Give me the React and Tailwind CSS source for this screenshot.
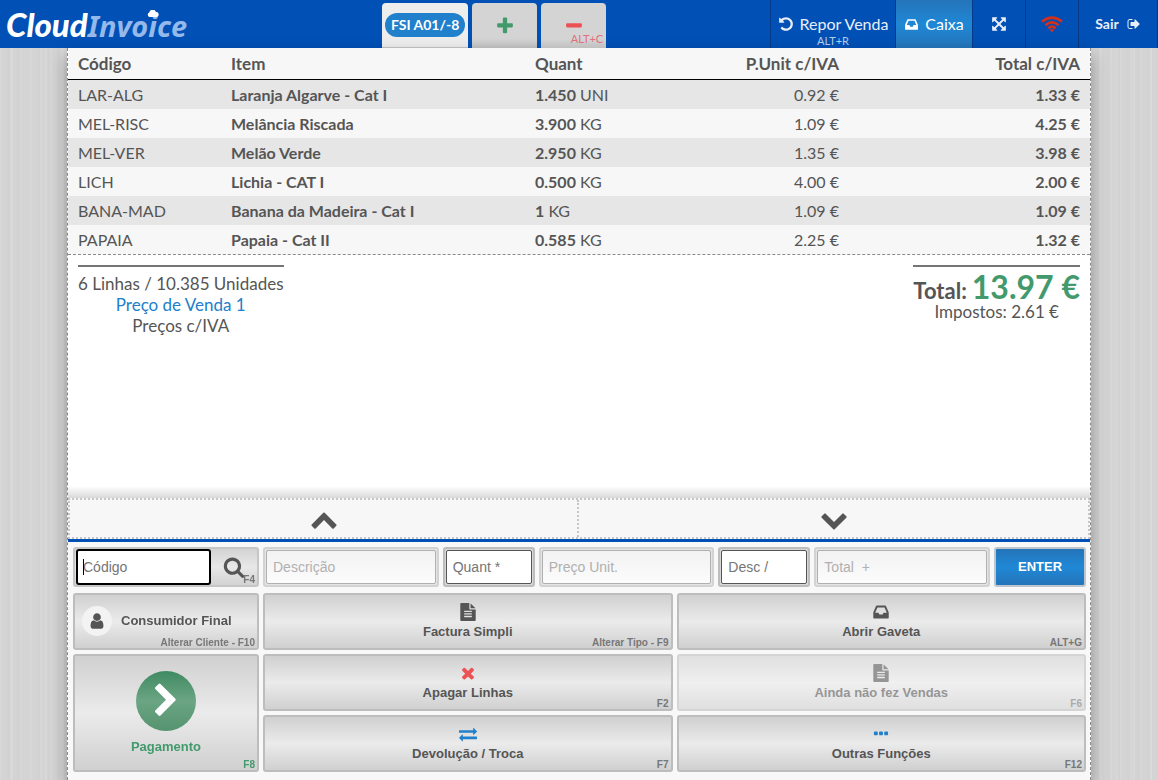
import React from "react";
import clsx from "clsx";

const ICONS = {
  undo: "M1664 896q0 156-61 298t-164 245-245 164-298 61q-172 0-327-72.5t-264-204.5q-7-10-6.5-22.5t8.5-20.5l137-138q10-9 25-9 16 2 23 12 73 95 179 147t225 52q104 0 198.5-40.5t163.5-109.5 109.5-163.5 40.5-198.5-40.5-198.5-109.5-163.5-163.5-109.5-198.5-40.5q-98 0-188 35.5t-160 101.5l137 138q31 30 14 69-17 40-59 40h-448q-26 0-45-19t-19-45v-448q0-42 40-59 39-17 69 14l130 129q107-101 244.5-156.5t284.5-55.5q156 0 298 61t245 164 164 245 61 298z",
  inbox: "M1151 960h316q-1-3-2.5-8.5t-2.5-7.5l-212-496h-708l-212 496q-1 3-2.5 8.5t-2.5 7.5h316l95 192h320zm513 30v482q0 26-19 45t-45 19h-1408q-26 0-45-19t-19-45v-482q0-62 25-123l238-552q10-25 36.5-42t52.5-17h832q26 0 52.5 17t36.5 42l238 552q25 61 25 123z",
  expand: "M1411 541l-355 355 355 355 144-144q29-31 70-14 39 17 39 59v448q0 26-19 45t-45 19h-448q-42 0-59-40-17-39 14-69l144-144-355-355-355 355 144 144q31 30 14 69-17 40-59 40h-448q-26 0-45-19t-19-45v-448q0-42 40-59 39-17 69 14l144 144 355-355-355-355-144 144q-19 19-45 19-12 0-24-5-40-17-40-59v-448q0-26 19-45t45-19h448q42 0 59 40 17 39-14 69l-144 144 355 355 355-355-144-144q-31-30-14-69 17-40 59-40h448q26 0 45 19t19 45v448q0 42-39 59-13 5-25 5-26 0-45-19z",
  signOut: "M704 1440q0 4 1 20t.5 26.5-3 23.5-10 19.5-20.5 6.5h-320q-119 0-203.5-84.5t-84.5-203.5v-704q0-119 84.5-203.5t203.5-84.5h320q13 0 22.5 9.5t9.5 22.5q0 4 1 20t.5 26.5-3 23.5-10 19.5-20.5 6.5h-320q-66 0-113 47t-47 113v704q0 66 47 113t113 47h312l11.5 1 11.5 3 8 5.5 7 9 2 13.5zm928-544q0 26-19 45l-544 544q-19 19-45 19t-45-19-19-45v-288h-448q-26 0-45-19t-19-45v-384q0-26 19-45t45-19h448v-288q0-26 19-45t45-19 45 19l544 544q19 19 19 45z",
  plus: "M1600 736v192q0 40-28 68t-68 28h-416v416q0 40-28 68t-68 28h-192q-40 0-68-28t-28-68v-416h-416q-40 0-68-28t-28-68v-192q0-40 28-68t68-28h416v-416q0-40 28-68t68-28h192q40 0 68 28t28 68v416h416q40 0 68 28t28 68z",
  minus: "M1600 736v192q0 40-28 68t-68 28h-1216q-40 0-68-28t-28-68v-192q0-40 28-68t68-28h1216q40 0 68 28t28 68z",
  times: "M1490 1322q0 40-28 68l-136 136q-28 28-68 28t-68-28l-294-294-294 294q-28 28-68 28t-68-28l-136-136q-28-28-28-68t28-68l294-294-294-294q-28-28-28-68t28-68l136-136q28-28 68-28t68 28l294 294 294-294q28-28 68-28t68 28l136 136q28 28 28 68t-28 68l-294 294 294 294q28 28 28 68z",
  chevronUp: "M1683 1331l-166 165q-19 19-45 19t-45-19l-531-531-531 531q-19 19-45 19t-45-19l-166-165q-19-19-19-45.5t19-45.5l742-741q19-19 45-19t45 19l742 741q19 19 19 45.5t-19 45.5z",
  chevronDown: "M1683 808l-742 741q-19 19-45 19t-45-19l-742-741q-19-19-19-45.5t19-45.5l166-165q19-19 45-19t45 19l531 531 531-531q19-19 45-19t45 19l166 165q19 19 19 45.5t-19 45.5z",
  chevronRight: "M1363 877l-742 742q-19 19-45 19t-45-19l-166-166q-19-19-19-45t19-45l531-531-531-531q-19-19-19-45t19-45l166-166q19-19 45-19t45 19l742 742q19 19 19 45t-19 45z",
  search: "M1216 832q0-185-131.5-316.5t-316.5-131.5-316.5 131.5-131.5 316.5 131.5 316.5 316.5 131.5 316.5-131.5 131.5-316.5zm512 832q0 52-38 90t-90 38q-54 0-90-38l-343-342q-179 124-399 124-143 0-273.5-55.5t-225-150-150-225-55.5-273.5 55.5-273.5 150-225 225-150 273.5-55.5 273.5 55.5 225 150 150 225 55.5 273.5q0 220-124 399l343 343q37 37 37 90z",
  user: "M1536 1399q0 109-62.5 187t-150.5 78h-854q-88 0-150.5-78t-62.5-187q0-85 8.5-160.5t31.5-152 58.5-131 94-89 134.5-34.5q131 128 313 128t313-128q76 0 134.5 34.5t94 89 58.5 131 31.5 152 8.5 160.5zm-256-887q0 159-112.5 271.5t-271.5 112.5-271.5-112.5-112.5-271.5 112.5-271.5 271.5-112.5 271.5 112.5 112.5 271.5z",
  file: "M1596 476q14 14 28 36h-472v-472q22 14 36 28zm-476 164h544v1056q0 40-28 68t-68 28h-1344q-40 0-68-28t-28-68v-1600q0-40 28-68t68-28h800v544q0 40 28 68t68 28zm160 736v-64q0-14-9-23t-23-9h-704q-14 0-23 9t-9 23v64q0 14 9 23t23 9h704q14 0 23-9t9-23zm0-256v-64q0-14-9-23t-23-9h-704q-14 0-23 9t-9 23v64q0 14 9 23t23 9h704q14 0 23-9t9-23zm0-256v-64q0-14-9-23t-23-9h-704q-14 0-23 9t-9 23v64q0 14 9 23t23 9h704q14 0 23-9t9-23z",
  exchange: "M1792 1184v192q0 13-9.5 22.5t-22.5 9.5h-1376v192q0 13-9.5 22.5t-22.5 9.5q-12 0-24-10l-319-320q-9-9-9-22 0-14 9-23l320-320q9-9 23-9 13 0 22.5 9.5t9.5 22.5v192h1376q13 0 22.5 9.5t9.5 22.5zm0-544q0 14-9 23l-320 320q-9 9-23 9-13 0-22.5-9.5t-9.5-22.5v-192h-1376q-13 0-22.5-9.5t-9.5-22.5v-192q0-13 9.5-22.5t22.5-9.5h1376v-192q0-14 9-23t23-9q12 0 24 10l319 319q9 9 9 23z",
  ellipsis: "M576 736v192q0 40-28 68t-68 28h-192q-40 0-68-28t-28-68v-192q0-40 28-68t68-28h192q40 0 68 28t28 68zm512 0v192q0 40-28 68t-68 28h-192q-40 0-68-28t-28-68v-192q0-40 28-68t68-28h192q40 0 68 28t28 68zm512 0v192q0 40-28 68t-68 28h-192q-40 0-68-28t-28-68v-192q0-40 28-68t68-28h192q40 0 68 28t28 68z",
};

const LINES = [
  { code: "LAR-ALG", item: "Laranja Algarve - Cat I", qty: "1.450", unit: "UNI", price: "0.92 €", total: "1.33 €" },
  { code: "MEL-RISC", item: "Melância Riscada", qty: "3.900", unit: "KG", price: "1.09 €", total: "4.25 €" },
  { code: "MEL-VER", item: "Melão Verde", qty: "2.950", unit: "KG", price: "1.35 €", total: "3.98 €" },
  { code: "LICH", item: "Lichia - CAT I", qty: "0.500", unit: "KG", price: "4.00 €", total: "2.00 €" },
  { code: "BANA-MAD", item: "Banana da Madeira - Cat I", qty: "1", unit: "KG", price: "1.09 €", total: "1.09 €" },
  { code: "PAPAIA", item: "Papaia - Cat II", qty: "0.585", unit: "KG", price: "2.25 €", total: "1.32 €" },
];

function Icon({ name, className }) {
  return (
    <svg viewBox="0 0 1792 1792" fill="currentColor" aria-hidden="true" className={clsx("shrink-0", className)}>
      <path d={ICONS[name]} />
    </svg>
  );
}

function WifiIcon() {
  return (
    <svg viewBox="0 0 22 17" fill="none" stroke="#d2301c" strokeWidth="2.7" className="h-[17px] w-[22px]" aria-hidden="true">
      <path d="M1 5.6Q11-2.2 21 5.6" />
      <path d="M4.4 9.2Q11 3.6 17.6 9.2" />
      <path d="M7.4 12.4Q11 9 14.6 12.4" />
      <path d="M8.8 13.8Q11 12 13.2 13.8L11 16.6z" fill="#d2301c" stroke="none" />
    </svg>
  );
}

function Logo() {
  return (
    <a href="#inicio" className="relative flex items-baseline pl-[6px] italic leading-[48px]">
      <span className="text-[33px] font-black text-white">Cloud</span>
      <span className="font-['Noto_Sans'] text-[29px] font-bold text-[#94b9ea]">Invoice</span>
      <svg viewBox="0 0 12 7" fill="white" className="absolute top-[10px] left-[147px] h-[7px] w-[12px]" aria-hidden="true">
        <path d="M2.5 7A2.3 2.3 0 0 1 2.3 2.6 3.4 3.4 0 0 1 8.9 2 2.5 2.5 0 0 1 9.5 7z" />
      </svg>
    </a>
  );
}

function Header() {
  const item = "flex items-center justify-center border-l border-[#063a86] text-[#e8eef8]";
  return (
    <header className="flex h-12 bg-[#0050b5]">
      <div className="w-[33%] shrink-0">
        <Logo />
      </div>

      <div className="flex items-end gap-1">
        <button className="flex h-[45px] w-[86px] items-center justify-center rounded-t border-b border-[#c4c4c4] bg-[#ededed]">
          <span className="rounded-full bg-[#2080cb] px-[6px] text-sm leading-6 font-bold whitespace-nowrap text-white">
            FSI A01/-8
          </span>
        </button>
        <button
          aria-label="Nova venda"
          className="flex h-[45px] w-[65px] items-center justify-center rounded-t bg-linear-to-b from-[#d4d4d4] from-80% to-[#c0c0c0] text-[#429a6c]"
        >
          <Icon name="plus" className="size-5" />
        </button>
        <button
          aria-label="Cancelar venda"
          className="relative flex h-[45px] w-[65px] items-center justify-center rounded-t bg-linear-to-b from-[#d4d4d4] from-80% to-[#c0c0c0] text-[#ec5153]"
        >
          <Icon name="minus" className="size-5" />
          <span className="absolute right-[3px] bottom-px text-[11px] leading-4 text-[#e2707a]">ALT+C</span>
        </button>
      </div>

      <nav className="ml-auto flex border-r border-[#063a86]">
        <button className={clsx(item, "relative w-[125px] gap-[6px]")}>
          <Icon name="undo" className="size-4" />
          <span className="text-base">Repor Venda</span>
          <span className="absolute inset-x-0 bottom-0 text-[11px] leading-[14px] text-[#b3cbec]">ALT+R</span>
        </button>
        <button className="flex w-[77px] items-center justify-center gap-[6px] border-l border-[#063a86] bg-linear-to-b from-[#2474b9] via-[#1f88d6] to-[#2474b9] text-white">
          <Icon name="inbox" className="size-[15px]" />
          <span className="text-base">Caixa</span>
        </button>
        <button aria-label="Ecrã inteiro" className={clsx(item, "w-[53px]")}>
          <Icon name="expand" className="size-4" />
        </button>
        <button aria-label="Ligação" className={clsx(item, "w-[53px]")}>
          <WifiIcon />
        </button>
        <a href="#sair" className={clsx(item, "w-[79px] gap-2 text-sm font-bold")}>
          Sair
          <Icon name="signOut" className="size-[14px]" />
        </a>
      </nav>
    </header>
  );
}

function LinesTable() {
  return (
    <div className="border-b border-dashed border-[#8a8a8a]">
      <table className="w-full table-fixed border-separate border-spacing-0 text-left text-base">
        <thead>
          <tr className="h-8 bg-[#f7f7f7] text-[17px]">
            <th className="w-[153px] border-b border-black px-[10px] font-bold">Código</th>
            <th className="w-[304px] border-b border-black px-[10px] font-bold">Item</th>
            <th className="w-[162px] border-b border-black px-[10px] font-bold">Quant</th>
            <th className="w-[162px] border-b border-black px-[10px] text-right font-bold">P.Unit c/IVA</th>
            <th className="border-b border-black px-[10px] text-right font-bold">Total c/IVA</th>
          </tr>
        </thead>
        <tbody>
          {LINES.map((line) => (
            <tr key={line.code} className="h-[29px] odd:bg-[#e6e6e6] even:bg-[#f7f7f7]">
              <td className="px-[10px]">{line.code}</td>
              <td className="px-[10px] font-bold">{line.item}</td>
              <td className="px-[10px]">
                <b>{line.qty}</b> {line.unit}
              </td>
              <td className="px-[10px] text-right">{line.price}</td>
              <td className="px-[10px] text-right font-bold">{line.total}</td>
            </tr>
          ))}
        </tbody>
      </table>
    </div>
  );
}

function Totals() {
  return (
    <div className="flex items-start justify-between px-[10px] pt-[10px]">
      <div className="border-t-2 border-[#757575] pt-[6px] text-center text-[17px] leading-[21px]">
        <p>6 Linhas / 10.385 Unidades</p>
        <p className="text-[#2080cb]">Preço de Venda 1</p>
        <p>Preços c/IVA</p>
      </div>
      <div className="border-t-2 border-[#757575] pt-1 text-center">
        <p className="flex items-baseline justify-center gap-[5px] font-bold">
          <span className="text-[22px] leading-6">Total:</span>
          <span className="text-[32px] leading-8 text-[#429a6c]">13.97 €</span>
        </p>
        <p className="text-[17px] leading-[18px]">Impostos: 2.61 €</p>
      </div>
    </div>
  );
}

function Scroller() {
  const half = "flex items-center justify-center";
  return (
    <div className="grid h-[41px] grid-cols-2 border-2 border-dotted border-[#c6c6c6] bg-[#f7f7f7]">
      <button aria-label="Subir" className={clsx(half, "border-r-2 border-dotted border-[#c6c6c6]")}>
        <Icon name="chevronUp" className="size-7" />
      </button>
      <button aria-label="Descer" className={half}>
        <Icon name="chevronDown" className="size-7" />
      </button>
    </div>
  );
}

function Field({ label, disabled, className }) {
  return (
    <div
      className={clsx(
        "flex h-10 rounded-[3px] border-2 p-px",
        disabled ? "border-[#d3d3d3] bg-[#e4e4e4]" : "border-[#bdbdbd] bg-[#d8d8d8]",
        className
      )}
    >
      <input
        aria-label={label}
        placeholder={label}
        disabled={disabled}
        className={clsx(
          "w-full min-w-0 rounded-[2px] border px-[6px] text-sm",
          disabled
            ? "border-[#b0b0b0] bg-linear-to-b from-[#f2f2f2] to-[#fcfcfc] placeholder:text-[#b0b0b0]"
            : "border-[#555] bg-white placeholder:text-[#757575]"
        )}
      />
    </div>
  );
}

function EntryRow() {
  return (
    <form className="flex gap-1" onSubmit={(e) => e.preventDefault()}>
      <div className="relative flex h-10 w-[186px] rounded-[3px] border-2 border-[#c6c6c6] bg-linear-to-b from-[#d3d3d3] via-[#e8e8e8] to-[#d3d3d3]">
        <input
          autoFocus
          aria-label="Código"
          placeholder="Código"
          className="peer ml-px w-[135px] rounded-[3px] border-2 border-black bg-white px-[5px] text-sm outline-none placeholder:text-[#757575] placeholder-shown:caret-transparent"
        />
        {/* caret of the empty box */}
        <span className="pointer-events-none absolute top-[10px] left-2 hidden h-4 w-px bg-black peer-placeholder-shown:block" />
        <button type="button" aria-label="Procurar" className="relative flex flex-1 items-center justify-center">
          <Icon name="search" className="size-[22px]" />
          <span className="absolute right-[2px] -bottom-px text-[10px] leading-3 font-bold text-[#777]">F4</span>
        </button>
      </div>
      <Field label="Descrição" disabled className="flex-1" />
      <Field label="Quant *" className="w-[92px]" />
      <Field label="Preço Unit." disabled className="flex-1" />
      <Field label="Desc /" className="w-[92px]" />
      <Field label="Total  +" disabled className="flex-1" />
      <button className="h-10 w-[92px] rounded-[3px] border-2 border-[#bdc6cf] bg-linear-to-b from-[#2474b9] via-[#1f88d6] to-[#2474b9] text-[13px] font-bold text-white">
        ENTER
      </button>
    </form>
  );
}

function ActionButton({ icon, iconClass, label, hint, disabled }) {
  return (
    <button
      disabled={disabled}
      className="relative flex h-[57px] flex-col items-center justify-center gap-[3px] rounded-[3px] border-2 border-[#bdbdbd] bg-linear-to-b from-[#d0d0d0] via-[#ebebeb] to-[#d0d0d0] disabled:opacity-60"
    >
      <Icon name={icon} className={clsx("size-[18px]", iconClass)} />
      <span className="text-[13px] leading-4 font-bold">{label}</span>
      <span className="absolute right-[2px] -bottom-px text-[10px] leading-3 font-bold text-[#777]">{hint}</span>
    </button>
  );
}

function Actions() {
  return (
    <div className="mt-[6px] grid grid-cols-[186px_1fr_1fr] gap-1 pb-2">
      <button className="relative flex h-[57px] items-center gap-[9px] rounded-[3px] border-2 border-[#bdbdbd] bg-linear-to-b from-[#d0d0d0] via-[#ebebeb] to-[#d0d0d0] pb-[2px] pl-[7px]">
        <span className="flex size-[30px] items-center justify-center rounded-full bg-[#f3f3f3]">
          <Icon name="user" className="size-[18px]" />
        </span>
        <span className="text-[13px] font-bold">Consumidor Final</span>
        <span className="absolute right-[2px] -bottom-px text-[10px] leading-3 font-bold text-[#777]">
          Alterar Cliente - F10
        </span>
      </button>
      <ActionButton icon="file" label="Factura Simpli" hint="Alterar Tipo - F9" />
      <ActionButton icon="inbox" label="Abrir Gaveta" hint="ALT+G" />

      <button className="relative row-span-2 flex flex-col items-center justify-center gap-2 rounded-[3px] border-2 border-[#bdbdbd] bg-linear-to-b from-[#d0d0d0] via-[#ebebeb] to-[#d0d0d0] text-[#429a6c]">
        <span className="flex size-[60px] items-center justify-center rounded-full bg-linear-to-b from-[#3f8a62] via-[#6ba583] to-[#55936f] text-white">
          <Icon name="chevronRight" className="size-9" />
        </span>
        <span className="text-[13px] leading-4 font-bold">Pagamento</span>
        <span className="absolute right-[2px] -bottom-px text-[10px] leading-3 font-bold">F8</span>
      </button>
      <ActionButton icon="times" iconClass="text-[#ec5153]" label="Apagar Linhas" hint="F2" />
      <ActionButton icon="file" label="Ainda não fez Vendas" hint="F6" disabled />
      <ActionButton icon="exchange" iconClass="text-[#2080cb]" label="Devolução / Troca" hint="F7" />
      <ActionButton icon="ellipsis" iconClass="text-[#2080cb]" label="Outras Funções" hint="F12" />
    </div>
  );
}

function App() {
  return (
    <div className="flex min-h-screen flex-col overflow-hidden bg-[#d4d4d4] bg-[repeating-linear-gradient(90deg,rgba(255,255,255,0.08)_0_2px,transparent_2px_7px,rgba(0,0,0,0.01)_7px_10px),repeating-linear-gradient(90deg,transparent_0_11px,rgba(255,255,255,0.1)_11px_13px,transparent_13px_17px)] font-[Lato,sans-serif] text-[#555]">
      <Header />
      <main className="mx-auto flex w-full max-w-[1024px] flex-1 flex-col border-x border-dashed border-[#8a8a8a] bg-white shadow-[0_8px_16px_rgba(0,0,0,0.35)]">
        <section className="flex-1">
          <LinesTable />
          <Totals />
        </section>
        <div className="h-3 bg-linear-to-b from-white to-[#d9d9d9]" />
        <Scroller />
        <section className="border-t-[3px] border-[#0050b5] bg-[#f8f8f8] pt-[5px] pr-1 pl-[5px] font-['Liberation_Sans',sans-serif]">
          <EntryRow />
          <Actions />
        </section>
      </main>
    </div>
  );
}

export default App;
